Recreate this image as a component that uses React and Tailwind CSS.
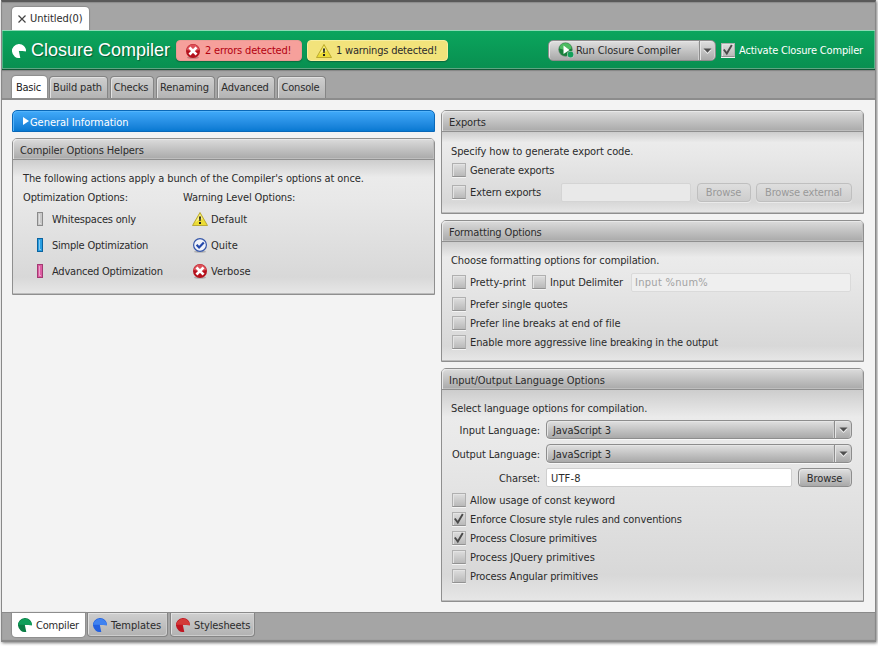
import React from "react";

const raised =
  "bg-linear-to-b from-[#e0e0e0] to-[#a9a9a9] border border-[#8d8d8d] shadow-[inset_1px_1px_0_#e6e6e6,inset_-1px_0_0_#cfcfcf]";

function T({ children, className = "" }) {
  return <span className={"whitespace-nowrap " + className}>{children}</span>;
}

function Pie({ color, light, className = "" }) {
  return (
    <svg width="14" height="14" viewBox="0 0 14 14" className={"shrink-0 " + className}>
      <path d="M6.800 6.800L14 7.300A7 7 0 1 0 8.300 13.900Z" fill={color} />
      <path d="M6.800 6.800L14 7.300A7 7 0 0 0 .100 6.800Z" fill={light} />
    </svg>
  );
}

function ErrorIcon() {
  return (
    <svg width="16" height="16" viewBox="0 0 16 16" className="shrink-0">
      <ellipse cx="8" cy="14.5" rx="6" ry="1.3" fill="#000" opacity=".2" />
      <circle cx="8" cy="8" r="7" fill="#b5111c" />
      <path d="M1.8 7a6.2 5.8 0 0 1 12.4 0Q8 9 1.8 7Z" fill="#dc5058" />
      <path d="M5.4 5.4l5.2 5.2M10.6 5.4l-5.2 5.2" stroke="#fff" strokeWidth="2.7" strokeLinecap="square" />
    </svg>
  );
}

function WarnIcon() {
  return (
    <svg width="16" height="16" viewBox="0 0 16 16" className="shrink-0">
      <path d="M8 1.5L15.5 14.5H.5Z" fill="#ecdc35" stroke="#b5a42c" strokeWidth=".9" strokeLinejoin="round" />
      <path d="M8 3L11 8.4Q7 8 3.2 11.4Z" fill="#fbf5a0" opacity=".8" />
      <path d="M7 5.4h2l-.4 4.6H7.400z" fill="#222" />
      <rect x="7" y="11" width="2" height="2" fill="#222" />
    </svg>
  );
}

function OkIcon() {
  return (
    <svg width="16" height="16" viewBox="0 0 16 16" className="shrink-0">
      <ellipse cx="8" cy="14.7" rx="6" ry="1.1" fill="#000" opacity=".2" />
      <circle cx="8" cy="8" r="6.4" fill="#f0f3fa" stroke="#3556a8" strokeWidth="1.2" />
      <path d="M4.600 7.800l2.500 2.700 4.700-5" fill="none" stroke="#2348ab" strokeWidth="2.200" />
    </svg>
  );
}

function RunIcon() {
  return (
    <svg width="17" height="17" viewBox="0 0 17 17" className="shrink-0">
      <circle cx="7.500" cy="7.500" r="6.800" fill="#17803a" stroke="#5d7f68" strokeWidth=".6" />
      <path d="M1.500 6.500a6 5.500 0 0 1 12 0Q8 9 1.500 6.500Z" fill="#4dbb62" />
      <path d="M5.500 3.500L11.500 8 5.500 12Z" fill="#fff" />
      <circle cx="12.500" cy="12.500" r="3.500" fill="#c4cfc8" />
      <circle cx="12.500" cy="12.500" r="2.900" fill="#11a05b" />
    </svg>
  );
}

function Bar({ dark, light }) {
  return (
    <svg width="6" height="15" viewBox="0 0 6 15" className="shrink-0">
      <rect x=".5" y=".5" width="5" height="13" fill={light} stroke={dark} />
      <path d="M2.500 2v9.500h1.500" stroke="#fff" strokeOpacity=".45" fill="none" />
    </svg>
  );
}

function Box({ checked }) {
  return (
    <span className="mb-px flex h-[14px] w-[14px] shrink-0 border border-[#b0b0b0] border-b-[#929292] bg-linear-to-b from-[#dedede] to-[#b9b9b9] shadow-[0_1px_0_#f4f4f4,inset_1px_1px_0_#e4e4e4]">
      {checked && (
        <svg width="12" height="12" viewBox="0 0 12 12">
          <path d="M1.800 5.500L4.800 9.500 9.800 1" fill="none" stroke="#4a4a4a" strokeWidth="1.900" />
        </svg>
      )}
    </span>
  );
}

function Check({ label, checked, track = "" }) {
  return (
    <div className="flex h-[19px] items-center gap-[4px] pl-px">
      <Box checked={checked} />
      <T className={track}>{label}</T>
    </div>
  );
}

function Panel({ title, height, track = "", children }) {
  return (
    <section className={"flex flex-col rounded-t-[5px] border border-[#8f8f8f] shadow-[inset_0_-1px_0_#bcbcbc] " + height}>
      <header className="flex h-[21px] shrink-0 items-center rounded-t-[4px] border-b border-[#8f8f8f] bg-linear-to-b from-[#dcdcdc] to-[#a9a9a9] pl-[7px] pt-[3px] shadow-[inset_1px_1px_0_#e8e8e8,inset_-1px_-1px_0_#bebebe]">
        <T className={track}>{title}</T>
      </header>
      <div className="mb-px flex-1 bg-[linear-gradient(to_bottom,#cdcdcd_0px,#ebebeb_13%,#e8e8e8_30%,#d8d8d8_88%,#e6e6e6_100%)]">
        {children}
      </div>
    </section>
  );
}

function Arrow() {
  return (
    <svg width="9" height="6" viewBox="0 0 9 6">
      <path d="M0.500 2h8L4.500 6Z" fill="#eee" />
      <path d="M.5.500h8L4.500 4.800Z" fill="#505050" />
    </svg>
  );
}

function Select({ value }) {
  return (
    <div className="flex h-[19px] w-[306px] rounded-[4px] shadow-[0_1px_0_#f8f8f8]">
      <div className={"flex flex-1 items-center rounded-l-[4px] pl-[6px] pt-[2px] " + raised}>
        <T>{value}</T>
      </div>
      <div className={"-ml-px flex w-[18px] items-center justify-center rounded-r-[4px] pt-px " + raised}>
        <Arrow />
      </div>
    </div>
  );
}

function Button({ children, className = "", off }) {
  return (
    <div className={"flex h-[19px] shrink-0 items-center justify-center rounded-[4px] pr-px " + className + " " + (off ? "border border-[#bfbfbf] bg-linear-to-b from-[#dedede] to-[#cdcdcd] text-[#999] shadow-[0_1px_0_#eaeaea]" : raised)}>
      {children}
    </div>
  );
}

function Tab({ label, active, width, track = "" }) {
  return (
    <div className={"flex h-[22px] items-center justify-center rounded-t-[4px] pr-[2px] " + width + " " + (active ? "bg-white pt-px text-[#222] shadow-[0_0_1px_1px_#8d8d8d]" : "border border-b-0 border-[#858585] bg-linear-to-b from-[#cfcfcf] to-[#b4b4b4] shadow-[inset_1px_1px_0_#e2e2e2]")}>
      <T className={track}>{label}</T>
    </div>
  );
}

function BottomTab({ label, active, width, color, light, track = "" }) {
  return (
    <div className={"flex h-[24px] items-center rounded-b-[4px] " + width + " " + (active ? "gap-[4px] bg-white pl-[6px] pt-px shadow-[0_0_1px_1px_#8d8d8d]" : "gap-[4px] border border-t-0 border-[#858585] bg-linear-to-b from-[#cfcfcf] to-[#b2b2b2] pl-[5px] pt-[2px] shadow-[inset_1px_1px_0_#e2e2e2,inset_-1px_-1px_0_#cdcdcd]")}>
      <Pie color={color} light={light} className="mb-px" />
      <T className={track}>{label}</T>
    </div>
  );
}

function Field({ label, track, children }) {
  return (
    <div className="flex h-[24px] items-start pt-px">
      <div className="flex h-[19px] w-[98px] shrink-0 items-center justify-end pt-[2px]">
        <T className={track}>{label}</T>
      </div>
      <div className="ml-[6px] flex items-center">{children}</div>
    </div>
  );
}

function Option({ icon, label, className, track = "" }) {
  return (
    <div className={"flex h-[26px] items-center pb-px " + className}>
      {icon}
      <T className={track}>{label}</T>
    </div>
  );
}

export default function App() {
  return (
    <div className="h-[646px] w-[878px] overflow-hidden bg-white pl-px font-['DejaVu_Sans_Condensed','DejaVu_Sans',sans-serif] text-[11px] leading-[15px] tracking-[-0.1px] text-[#2b2b2b] [font-stretch:condensed]">
      <div className="flex h-[642px] w-[875px] flex-col border border-t-2 border-[#888] border-t-[#595959] bg-[#f3f3f3] shadow-[1px_1px_3px_#777]">
        <div className="flex h-[28px] shrink-0 items-end bg-[#a5a5a5] pl-[10px] shadow-[inset_0_1px_1px_#8c8c8c]">
          <div className="flex h-[23px] w-[77px] items-center rounded-t-[4px] bg-white pl-[6px] shadow-[0_0_1px_1px_#8d8d8d]">
            <svg width="8" height="8" viewBox="0 0 8 8" className="mr-[4px]">
              <path d="M.5.500l7 7M7.500.500l-7 7" stroke="#444" strokeWidth="1.200" />
            </svg>
            <T className="tracking-[-0.05px]">Untitled(0)</T>
          </div>
        </div>

        <div className="flex h-[40px] shrink-0 items-center border-y border-t-[#8fd9b5] border-b-[#135a38] bg-linear-to-b from-[#0ba55d] to-[#088f50] pl-[10px] pt-px shadow-[inset_0_-1px_0_#5fa583,inset_1px_0_0_#54b487,inset_-1px_0_0_#54b487]">
          <Pie color="#fff" light="#fff" className="mt-px" />
          <T className="mb-[2px] ml-[5px] w-[140px] font-['Liberation_Sans',Arial,sans-serif] text-[18px] leading-[22px] tracking-normal text-white [font-stretch:normal] [text-shadow:1px_1px_1px_#0a5a36]">Closure Compiler</T>
          <div className="ml-[5px] flex h-[21px] w-[126px] items-center gap-[4px] rounded-[4px] border border-[#e99b95] bg-[#f6a09b] pl-[8px] text-[#b3000f] shadow-[0_1px_1px_#0a6b3f]">
            <ErrorIcon />
            <T className="tracking-[-0.18px]">2 errors detected!</T>
          </div>
          <div className="ml-[5px] flex h-[21px] w-[141px] items-center gap-[4px] rounded-[4px] border border-[#f7ee9e] bg-[#f2e37b] pl-[8px] shadow-[0_1px_1px_#0a6b3f]">
            <WarnIcon />
            <T className="tracking-[-0.2px]">1 warnings detected!</T>
          </div>
          <div className="ml-[100px] flex h-[21px]">
            <div className={"flex w-[152px] items-center gap-[1px] rounded-l-[5px] pl-[9px] " + raised}>
              <RunIcon />
              <T>Run Closure Compiler</T>
            </div>
            <div className={"-ml-px flex w-[17px] items-center justify-center rounded-r-[5px] pt-px " + raised}>
              <Arrow />
            </div>
          </div>
          <div className="ml-[5px] flex items-center gap-[4px] text-white">
            <Box checked />
            <T className="tracking-[-0.18px]">Activate Closure Compiler</T>
          </div>
        </div>

        <div className="flex h-[30px] shrink-0 items-end gap-[2px] border-b-2 border-[#8c8c8c] bg-[#a5a5a5] pl-[10px] shadow-[inset_0_1px_1px_#858585]">
          <Tab label="Basic" active width="w-[35px]" track="tracking-[-0.2px]" />
          <Tab label="Build path" width="w-[59px]" track="tracking-[-0.15px]" />
          <Tab label="Checks" width="w-[44px]" track="tracking-[-0.2px]" />
          <Tab label="Renaming" width="w-[59px]" />
          <Tab label="Advanced" width="w-[58px]" track="tracking-[-0.2px]" />
          <Tab label="Console" width="w-[49px]" track="tracking-[-0.2px]" />
        </div>

        <main className="flex flex-1 gap-[6px] pl-[10px] pt-[10px]">
          <div className="flex w-[423px] flex-col gap-[6px]">
            <div className="flex h-[22px] items-center gap-[1px] rounded-t-[5px] border border-[#0a68b8] bg-linear-to-b from-[#41aafa] to-[#0779d2] pl-[10px] pt-[3px] text-white shadow-[inset_1px_1px_0_#54b4fb]">
              <svg width="6" height="8" viewBox="0 0 6 8" className="mb-[3px]">
                <path d="M0 0L6 4 0 8Z" fill="#fff" />
              </svg>
              <T className="tracking-[-0.05px]">General Information</T>
            </div>
            <Panel title="Compiler Options Helpers" height="h-[157px]" track="tracking-[-0.13px]">
              <div className="mt-[9px] flex h-[19px] items-center pl-[10px]">
                <T className="tracking-[-0.11px]">The following actions apply a bunch of the Compiler's options at once.</T>
              </div>
              <div className="flex">
                <div className="w-[160px] pl-[10px]">
                  <div className="flex h-[19px] items-center">
                    <T className="tracking-[-0.15px]">Optimization Options:</T>
                  </div>
                  <Option className="gap-[9px] pl-[14px]" icon={<Bar dark="#8a8a8a" light="#c9c9c9" />} label="Whitespaces only" track="tracking-[-0.2px]" />
                  <Option className="gap-[9px] pl-[14px]" icon={<Bar dark="#0a63a0" light="#2a9fe2" />} label="Simple Optimization" track="tracking-[-0.22px]" />
                  <Option className="gap-[9px] pl-[14px]" icon={<Bar dark="#a33a72" light="#dd5ea3" />} label="Advanced Optimization" track="tracking-[-0.22px]" />
                </div>
                <div className="pl-[10px]">
                  <div className="flex h-[19px] items-center">
                    <T>Warning Level Options:</T>
                  </div>
                  <Option className="gap-[3px] pl-[9px] [&>svg]:mb-px" icon={<WarnIcon />} label="Default" track="tracking-normal" />
                  <Option className="gap-[3px] pl-[9px] [&>svg]:mb-px" icon={<OkIcon />} label="Quite" track="tracking-normal" />
                  <Option className="gap-[3px] pl-[9px] [&>svg]:mb-px" icon={<ErrorIcon />} label="Verbose" track="tracking-normal" />
                </div>
              </div>
            </Panel>
          </div>

          <div className="flex w-[423px] flex-col gap-[6px]">
            <Panel title="Exports" height="h-[104px]">
              <div className="pl-[9px] pt-[10px]">
                <div className="flex h-[19px] items-center"><T>Specify how to generate export code.</T></div>
                <Check label="Generate exports" track="tracking-[-0.15px]" />
                <div className="flex h-[25px] items-center">
                  <div className="w-[110px]"><Check label="Extern exports" /></div>
                  <div className="h-[19px] w-[130px] rounded-[2px] border border-[#d4d4d4] bg-[#e9e9e9]" />
                  <Button off className="ml-[6px] w-[54px]"><T>Browse</T></Button>
                  <Button off className="ml-[5px] w-[96px]"><T className="tracking-[-0.2px]">Browse external</T></Button>
                </div>
              </div>
            </Panel>
            <Panel title="Formatting Options" height="h-[142px]" track="tracking-[-0.15px]">
              <div className="pl-[9px] pt-[9px]">
                <div className="flex h-[19px] items-center"><T>Choose formatting options for compilation.</T></div>
                <div className="flex h-[25px] items-center">
                  <div className="w-[80px]"><Check label="Pretty-print" track="tracking-normal" /></div>
                  <div className="w-[100px]"><Check label="Input Delimiter" /></div>
                  <div className="flex h-[19px] w-[220px] items-center rounded-[2px] border border-[#dadada] bg-[#efefef] pl-[3px] text-[#a2a2a2]"><T className="tracking-[0.3px]">Input %num%</T></div>
                </div>
                <Check label="Prefer single quotes" track="tracking-[-0.05px]" />
                <Check label="Prefer line breaks at end of file" track="tracking-[-0.06px]" />
                <Check label="Enable more aggressive line breaking in the output" track="tracking-[-0.12px]" />
              </div>
            </Panel>
            <Panel title="Input/Output Language Options" height="h-[234px]" track="tracking-[-0.03px]">
              <div className="pt-[9px]">
                <div className="mb-px flex h-[19px] items-center pl-[9px]"><T>Select language options for compilation.</T></div>
                <Field label="Input Language:" track="tracking-[-0.03px]"><Select value="JavaScript 3" /></Field>
                <Field label="Output Language:"><Select value="JavaScript 3" /></Field>
                <Field label="Charset:">
                  <div className="flex h-[19px] w-[246px] items-center rounded-[2px] border border-[#cfcfcf] bg-white pl-[4px] pt-[2px]"><T className="tracking-[0.15px]">UTF-8</T></div>
                  <Button className="ml-[6px] w-[54px] pt-[2px]"><T>Browse</T></Button>
                </Field>
                <div className="pl-[9px]">
                  <Check label="Allow usage of const keyword" track="tracking-[-0.06px]" />
                  <Check label="Enforce Closure style rules and conventions" checked track="tracking-[-0.12px]" />
                  <Check label="Process Closure primitives" checked track="tracking-[-0.13px]" />
                  <Check label="Process JQuery primitives" track="tracking-[-0.05px]" />
                  <Check label="Process Angular primitives" track="tracking-[-0.13px]" />
                </div>
              </div>
            </Panel>
          </div>
        </main>

        <footer className="flex h-[29px] shrink-0 items-start gap-[2px] border-t border-[#8a8a8a] bg-[#a5a5a5] pl-[10px] shadow-[inset_0_-1px_1px_#858585]">
          <BottomTab label="Compiler" active width="w-[73px]" color="#0a7d45" light="#0f9e5a" track="tracking-[-0.2px]" />
          <BottomTab label="Templates" width="w-[81px]" color="#2260e0" light="#3f82f0" track="tracking-normal" />
          <BottomTab label="Stylesheets" width="w-[85px]" color="#bf1420" light="#d33a38" />
        </footer>
      </div>
    </div>
  );
}
